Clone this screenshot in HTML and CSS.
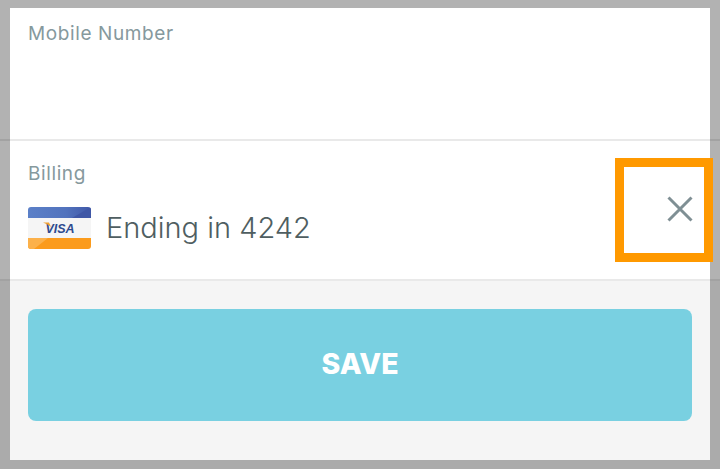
FILE: index.html
```html
<!DOCTYPE html>
<html lang="en">
<head>
  <meta charset="UTF-8">
  <title>Billing</title>
  <link rel="stylesheet" href="styles.css">
</head>
<body>
  <div class="row row-mobile">
    <div class="label">Mobile Number</div>
  </div>
  <div class="row row-billing">
    <div class="label">Billing</div>
    <div class="card-line">
      <svg class="visa" viewBox="0 0 63 42" width="63" height="42">
        <defs>
          <clipPath id="cardClip"><rect width="63" height="42" rx="3"/></clipPath>
          <linearGradient id="blueBand" x1="0" x2="1" y1="0" y2="0">
            <stop offset="0" stop-color="#5b80c8"/>
            <stop offset="0.6" stop-color="#5273bd"/>
            <stop offset="1" stop-color="#4058a8"/>
          </linearGradient>
        </defs>
        <g clip-path="url(#cardClip)">
          <rect width="63" height="12" fill="url(#blueBand)"/>
          <polygon points="44,11 63,0 63,11" fill="#3f57a6"/>
          <rect y="11" width="63" height="20" fill="#f5f5f5"/>
          <rect y="31" width="63" height="11" fill="#fb9b1c"/>
          <polygon points="0,42 0,31 20,31 6,42" fill="#fcb14a"/>
          <text x="32" y="25.500" class="visa-text">VISA</text>
          <path d="M15 15.500 21 15.500 23 20Q20 17 15 15.500Z" fill="#f0a030"/>
        </g>
      </svg>
      <span class="ending">Ending in 4242</span>
      <svg class="close" viewBox="0 0 26 26" width="26" height="26">
        <path d="M1.500 1.500 24.500 24.500M24.500 1.500 1.500 24.500" stroke="#7f8f94" stroke-width="3" fill="none"/>
      </svg>
    </div>
  </div>
  <div class="footer">
    <button class="save">SAVE</button>
  </div>

  <!-- overlays -->
  <div class="frame"></div>
  <div class="highlight"></div>
</body>
</html>
```

FILE: styles.css
```css
* {
  box-sizing: border-box;
}

html, body {
  margin: 0;
  height: 469px;
  overflow: hidden;
}

body {
  position: relative;
  display: flex;
  flex-direction: column;
  font-family: "Inter", "Liberation Sans", sans-serif;
  background: #f5f5f5;
}

.row {
  background: #ffffff;
  border-bottom: 2px solid #e9e9e9;
  padding: 0 28px;
}

.row-mobile {
  height: 141px;
  padding-top: 24px;
}

.row-billing {
  height: 140px;
  padding-top: 23px;
}

.label {
  font-size: 19px;
  line-height: 20px;
  letter-spacing: 0.6px;
  color: #86999d;
}

.card-line {
  display: flex;
  align-items: center;
  margin-top: 23px;
}

.visa {
  flex: none;
}

.visa-text {
  font-family: "Liberation Sans", sans-serif;
  font-size: 12.500px;
  font-weight: bold;
  font-style: italic;
  text-anchor: middle;
  fill: #2f4b8f;
}

.ending {
  margin-left: 15px;
  font-size: 29px;
  line-height: 42px;
  font-weight: 300;
  color: #4f5e61;
}

.close {
  align-self: flex-start;
  margin-left: auto;
  margin-right: -1px;
  margin-top: -11px;
}

.footer {
  flex: 1;
  padding: 28px 28px 0;
}

.save {
  display: block;
  width: 100%;
  height: 112px;
  padding-bottom: 4px;
  border: none;
  border-radius: 8px;
  background: #79d0e1;
  color: #ffffff;
  font-family: "Inter", "Liberation Sans", sans-serif;
  font-size: 28.500px;
  font-weight: 800;
}

.frame {
  position: absolute;
  inset: 0;
  border-style: solid;
  border-color: rgba(0, 0, 0, 0.3);
  border-width: 8px 10px 9px;
}

.highlight {
  position: absolute;
  left: 615px;
  top: 158px;
  width: 98px;
  height: 104px;
  border: 9px solid #ff9900;
}
```
